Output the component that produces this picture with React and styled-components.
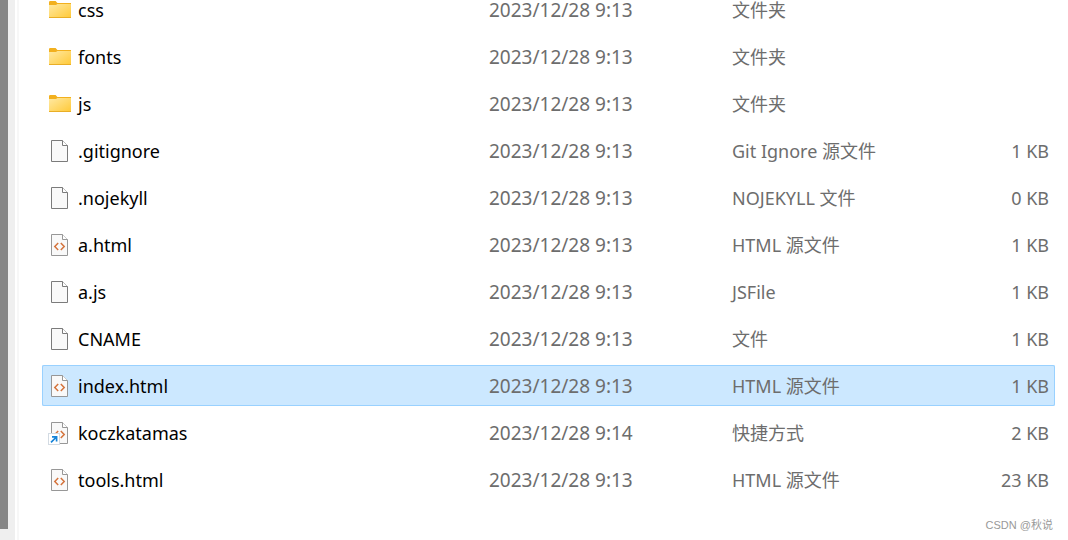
// # IMPORTS
import React from 'react';
import styled, { createGlobalStyle } from 'styled-components';

// # DATA
const FILES = [
    { name: 'css', kind: 'folder', date: '2023/12/28 9:13', type: '文件夹', size: '' },
    { name: 'fonts', kind: 'folder', date: '2023/12/28 9:13', type: '文件夹', size: '' },
    { name: 'js', kind: 'folder', date: '2023/12/28 9:13', type: '文件夹', size: '' },
    { name: '.gitignore', kind: 'file', date: '2023/12/28 9:13', type: 'Git Ignore 源文件', size: '1 KB' },
    { name: '.nojekyll', kind: 'file', date: '2023/12/28 9:13', type: 'NOJEKYLL 文件', size: '0 KB' },
    { name: 'a.html', kind: 'html', date: '2023/12/28 9:13', type: 'HTML 源文件', size: '1 KB' },
    { name: 'a.js', kind: 'file', date: '2023/12/28 9:13', type: 'JSFile', size: '1 KB' },
    { name: 'CNAME', kind: 'file', date: '2023/12/28 9:13', type: '文件', size: '1 KB' },
    { name: 'index.html', kind: 'html', date: '2023/12/28 9:13', type: 'HTML 源文件', size: '1 KB', selected: true },
    { name: 'koczkatamas', kind: 'shortcut', date: '2023/12/28 9:14', type: '快捷方式', size: '2 KB' },
    { name: 'tools.html', kind: 'html', date: '2023/12/28 9:13', type: 'HTML 源文件', size: '23 KB' },
];

// # STYLED
const GlobalStyle = createGlobalStyle`
    body {
        margin: 0;
        background: #ffffff;
        font-family: "Noto Sans", "Noto Sans CJK SC", sans-serif;
        overflow: hidden;
    }
`;
const Window = styled.div`
    display: flex;
    height: 100vh;
    overflow: hidden;
`;
const ScrollTrack = styled.div`
    flex: 0 0 15px;
    box-sizing: border-box;
    padding-bottom: 11px;
    background: #efefef;
`;
const ScrollThumb = styled.div`
    width: 8px;
    height: 100%;
    background: #868686;
`;
const Splitter = styled.div`
    flex: 0 0 2px;
    margin-left: 2px;
    background: #f7f7f7;
`;
const Pane = styled.main`
    flex: 1;
    min-width: 0;
    padding: 0 13px 0 23px;
`;
const FileTable = styled.table`
    width: 100%;
    margin-top: -17px;
    table-layout: fixed;
    border-collapse: separate;
    border-spacing: 0 6px;
`;
const FileRow = styled.tr`
    height: 41px;
    border-radius: 2px;
    background: ${props => props.$selected ? '#cce8ff' : 'transparent'};
    outline: ${props => props.$selected ? '1px solid #99d1ff' : 'none'};
    outline-offset: -1px;
`;
const Cell = styled.td`
    width: ${props => props.$width};
    padding: 0 6px 0 0;
    color: #6d6d6d;
    font-size: 18px;
    line-height: 20px;
    white-space: nowrap;
    text-align: ${props => props.$right ? 'right' : 'left'};
`;
const NameCell = styled(Cell)`
    padding-left: 6px;
    color: #000000;
`;
const DateCell = styled(Cell)`
    font-size: 19px;
`;
const NameBox = styled.div`
    display: flex;
    align-items: center;
    gap: 6px;
`;
const Icon = styled.svg`
    flex: 0 0 24px;
    height: 25px;
`;
const Credit = styled.footer`
    margin-top: 10px;
    padding-right: 2px;
    color: #999999;
    font-family: "Liberation Sans", "Noto Sans CJK SC", sans-serif;
    font-size: 11px;
    line-height: 18px;
    text-align: right;
`;

// # ICONS
function FolderIcon(){
    return(
        <Icon viewBox="0 0 24 25" aria-hidden="true">
            <defs>
                <linearGradient id="folder" x1="0" y1="0" x2="1" y2="1">
                    <stop offset="0" stopColor="#ffe9a3"/>
                    <stop offset="1" stopColor="#ffc937"/>
                </linearGradient>
            </defs>
            <path d="M1 5.2Q1 4 2.2 4H7.6L9.4 6H23V10H1Z" fill="#f2b01e"/>
            <path d="M1 8H8L9.4 7H23V20.4Q23 21 22.4 21H1.6Q1 21 1 20.4Z" fill="url(#folder)"/>
            <path d="M1 20H23V20.4Q23 21 22.4 21H1.6Q1 21 1 20.4Z" fill="#e9ae26"/>
        </Icon>
    );
}
function FileIcon({ kind }){
    const stroke = kind === 'file' ? '#7b7b7b' : '#979797';
    return(
        <Icon viewBox="0 0 24 25" aria-hidden="true">
            <path d="M3.5 2.5H14.5L19.5 7.5V23.5H3.5Z" fill="#f9f9f9" stroke={stroke}/>
            <path d="M14.5 2.5V7.5H19.5" fill="#ffffff" stroke={stroke}/>
            {kind !== 'file' &&
                <path d="M10.2 11L6.8 14.5L10.2 18M12.8 11L16.2 14.5L12.8 18" fill="none" stroke="#d4733c" strokeWidth="1.5"/>
            }
            {kind === 'shortcut' &&
                <>
                    <rect x="0.5" y="13.5" width="11" height="11" fill="#ffffff" stroke="#d3dbe3"/>
                    <path d="M3 22.4L8.4 17M4 16.8H8.6V21.4" fill="none" stroke="#1583d8" strokeWidth="1.7"/>
                </>
            }
        </Icon>
    );
}

// # COMPONENT
export default function App(){
    return(
        <>
            <GlobalStyle/>
            <Window>
                <ScrollTrack>
                    <ScrollThumb/>
                </ScrollTrack>
                <Splitter/>
                <Pane>
                    <FileTable>
                        <tbody>
                            {FILES.map(file => (
                                <FileRow key={file.name} $selected={file.selected}>
                                    <NameCell $width="auto">
                                        <NameBox>
                                            {file.kind === 'folder' ? <FolderIcon/> : <FileIcon kind={file.kind}/>}
                                            {file.name}
                                        </NameBox>
                                    </NameCell>
                                    <DateCell $width="237px">{file.date}</DateCell>
                                    <Cell $width="194px">{file.type}</Cell>
                                    <Cell $width="117px" $right>{file.size}</Cell>
                                </FileRow>
                            ))}
                        </tbody>
                    </FileTable>
                    <Credit>CSDN @秋说</Credit>
                </Pane>
            </Window>
        </>
    );
}
